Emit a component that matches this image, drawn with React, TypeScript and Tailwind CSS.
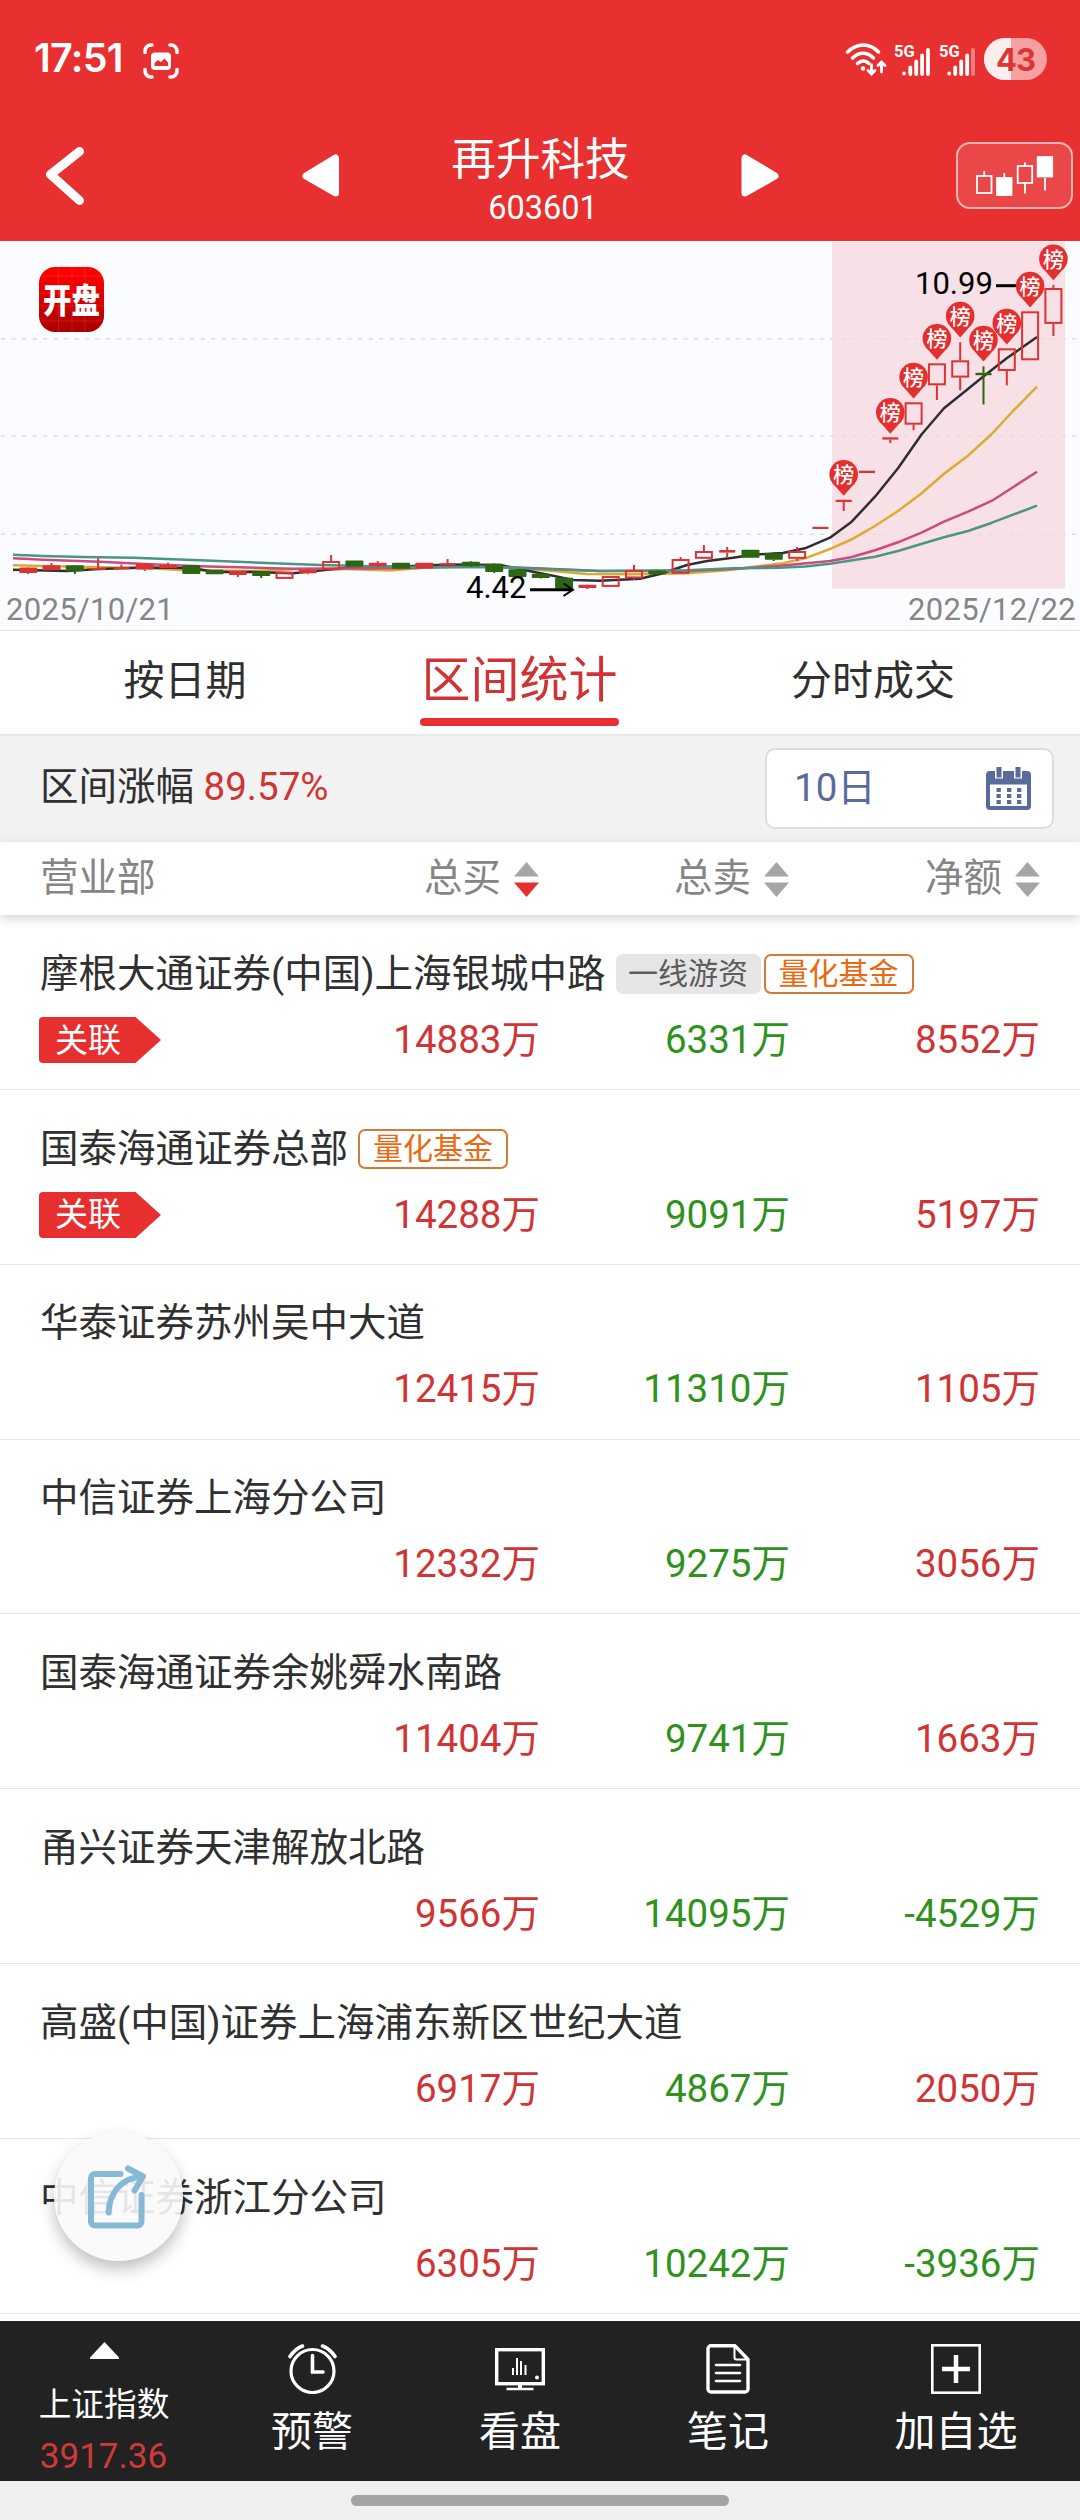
import { clsx } from "clsx";

type CandleKind = "solid" | "hollow" | "down";

// [kind, body top, body bottom, high, low]
type Candle = [CandleKind, number, number, number, number];

interface Branch {
  name: string;
  tags: ("first" | "quant")[];
  linked: boolean;
  buy: string;
  sell: string;
  net: string;
}

const RED = "#da3334";
const GREEN = "#2c6612";

const candles: Candle[] = [
  ["solid", 326.5, 332, 326, 333],
  ["solid", 324.3, 329.3, 322, 329],
  ["down", 324.3, 330.3, 324, 333],
  ["solid", 327, 328.8, 317.3, 329],
  ["solid", 326, 328.3, 323.5, 328],
  ["solid", 322.7, 328.5, 322, 330],
  ["solid", 324, 327.3, 321.7, 327],
  ["down", 324, 333, 324, 333],
  ["down", 328.7, 333.3, 329, 333],
  ["solid", 330, 334, 330, 336],
  ["down", 330.3, 335, 330, 337],
  ["hollow", 330.7, 337.9, 331, 338],
  ["solid", 328.7, 332.3, 328, 333.3],
  ["hollow", 320, 329.2, 314, 329],
  ["down", 319.5, 325.8, 319.5, 326],
  ["solid", 321.7, 325.2, 320, 326],
  ["down", 321.7, 327.7, 321.7, 328],
  ["solid", 321.7, 327.3, 321.7, 327],
  ["solid", 322.3, 324.5, 318, 324],
  ["down", 320.7, 325.3, 320, 326],
  ["down", 322.7, 331, 322, 332],
  ["down", 328.3, 335.9, 328, 336],
  ["down", 332.7, 336.9, 332, 337.5],
  ["down", 336.7, 347.7, 336, 348],
  ["solid", 343.7, 346.9, 343.5, 348],
  ["hollow", 335, 345.9, 335, 346],
  ["hollow", 329, 337.4, 324, 339],
  ["down", 329.5, 333.2, 329, 334],
  ["hollow", 318, 332.8, 316, 333],
  ["hollow", 310, 317.8, 304, 318],
  ["solid", 309, 311.6, 306, 317],
  ["down", 308.7, 316.8, 308.7, 317],
  ["down", 312.3, 318.8, 311, 320],
  ["hollow", 310, 317.8, 306, 320],
  ["solid", 285.8, 288, 286, 287],
  ["solid", 258.8, 261, 259, 270],
  ["solid", 229.7, 232, 230, 231],
  ["solid", 196.3, 198.6, 197, 202],
  ["hollow", 161.3, 183.7, 161.3, 189.3],
  ["hollow", 122.3, 144.3, 122.3, 159],
  ["hollow", 119.3, 136.6, 101.3, 149.3],
  ["down", 131.8, 134.2, 125.3, 163.5],
  ["hollow", 107.3, 130, 107.3, 144.3],
  ["hollow", 70.3, 119.3, 70.3, 119.3],
  ["hollow", 47, 82.9, 44, 95],
];

const candleX = (index: number) => 28.2 + 23.3 * index;

// Days on which the stock made the top traders board
const boardPins = [
  { index: 35, y: 233.3 },
  { index: 37, y: 171.3 },
  { index: 38, y: 136 },
  { index: 39, y: 97.3 },
  { index: 40, y: 75 },
  { index: 41, y: 99 },
  { index: 42, y: 82 },
  { index: 43, y: 45 },
  { index: 44, y: 17.7 },
];

const averages = [
  {
    color: "#dcac2e",
    points:
      "13,324.3 67,325.5 150,327.3 180,329 253,330 300,328 345,328 390,329.5 443,325 500,325.7 550,329.7 587,333 633,333.3 687,332.3 727,329.3 760,325 783,322.3 805,317.3 830,308 851.7,298.3 875,285 898,270 921.7,252.3 944,232.7 968,214.7 991.7,193 1013,170 1037,145.7",
  },
  {
    color: "#2f2f33",
    points:
      "13,328.7 67,330 99,328 145,326.5 192,327 215,331 253,331 293,332.3 315,330 355,326 400,325.5 450,323.5 500,324 533,330.7 553,334.7 573,339 600,339.7 640,337.7 660,333 687,324 707,320 733,316.7 753,313.7 783,312 805,307.3 830,296.7 851.7,280.7 875,255.7 898,227.3 921.7,193.3 944,167.3 966.7,149 983,135.7 1006.7,117.3 1037,96",
  },
  {
    color: "#cb4a80",
    points:
      "13,317.3 43,318.7 100,320.7 150,323.3 200,325.3 293,327.7 400,327.3 480,325.5 530,327 600,330 687,330 733,328 780,324.7 830,320 851,316.3 875,309.3 898,301.3 922,291.3 944,280.7 968,270.7 992,259.7 1013,246.3 1037,230.7",
  },
  {
    color: "#4a9583",
    points:
      "13,313.7 43,315 83,316 133,316.7 200,319.3 260,321.7 320,324 400,326 500,326.3 550,328.3 600,330 687,329.3 733,327.3 780,326.7 805,325.5 830,322.7 875,315.7 898,310 922,302.7 944,296.3 968,290 992,281.7 1013,273.7 1037,264.7",
  },
];

const branches: Branch[] = [
  {
    name: "摩根大通证券(中国)上海银城中路",
    tags: ["first", "quant"],
    linked: true,
    buy: "14883万",
    sell: "6331万",
    net: "8552万",
  },
  {
    name: "国泰海通证券总部",
    tags: ["quant"],
    linked: true,
    buy: "14288万",
    sell: "9091万",
    net: "5197万",
  },
  {
    name: "华泰证券苏州吴中大道",
    tags: [],
    linked: false,
    buy: "12415万",
    sell: "11310万",
    net: "1105万",
  },
  {
    name: "中信证券上海分公司",
    tags: [],
    linked: false,
    buy: "12332万",
    sell: "9275万",
    net: "3056万",
  },
  {
    name: "国泰海通证券余姚舜水南路",
    tags: [],
    linked: false,
    buy: "11404万",
    sell: "9741万",
    net: "1663万",
  },
  {
    name: "甬兴证券天津解放北路",
    tags: [],
    linked: false,
    buy: "9566万",
    sell: "14095万",
    net: "-4529万",
  },
  {
    name: "高盛(中国)证券上海浦东新区世纪大道",
    tags: [],
    linked: false,
    buy: "6917万",
    sell: "4867万",
    net: "2050万",
  },
  {
    name: "中信证券浙江分公司",
    tags: [],
    linked: false,
    buy: "6305万",
    sell: "10242万",
    net: "-3936万",
  },
];

function StatusBar() {
  return (
    <div className="flex h-[118px] shrink-0 items-center justify-between pl-[34px] pr-[33px]">
      <div className="flex items-center gap-[20px]">
        <span className="font-['Inter',sans-serif] text-[39.5px] font-semibold leading-none tracking-[-0.7px]">
          17:51
        </span>
        <svg
          width="36"
          height="36"
          viewBox="0 0 36 36"
          fill="none"
          stroke="#fff"
          strokeWidth="3.6"
          strokeLinecap="round"
          className="mt-[3px]"
        >
          <path d="M2 9.500V8a6 6 0 0 1 6-6h1M27 2h1a6 6 0 0 1 6 6v1.500M34 26.500V28a6 6 0 0 1-6 6h-1M9 34H8a6 6 0 0 1-6-6v-1.500" />
          <rect x="8" y="9.500" width="20" height="17.500" rx="4" fill="#fff" stroke="none" />
          <path
            d="M11.500 23v-3l3.500-3 3 2 3.500-3.500 3.500 4V23z"
            fill="#e83030"
            stroke="none"
          />
        </svg>
      </div>
      <svg
        width="202"
        height="44"
        viewBox="0 0 202 44"
        fill="none"
        stroke="#fff"
        strokeLinecap="round"
      >
        <g strokeWidth="3.500">
          <path d="M2.500 15c9.500-9.500 22.500-9.500 31 0" />
          <path d="M7.500 21c6.500-6.500 14.500-6.500 21 0" />
          <path d="M12.500 26.500c3.500-3.200 8-3.200 11.500 0" />
          <path d="M26.500 28v8.500M23 33.500l3.500 3.500 3.500-3.500M36.500 35v-9M33 28.500l3.500-3.500 3.500 3.500" strokeWidth="2.800" />
        </g>
        <circle cx="18" cy="31.500" r="2.300" fill="#fff" stroke="none" />
        <g
          fill="#fff"
          stroke="none"
          className="font-['Roboto',sans-serif] text-[16.5px] font-bold"
        >
          <text x="49" y="19.500">5G</text>
          <text x="94" y="19.500">5G</text>
        </g>
        <g strokeWidth="3.800">
          <path d="M59 36.500v0.100M65.300 30.500v6.500M71.200 24.500v12.500M77.100 18.500v18.500M83 13v24" />
          <path d="M104.200 36.500v0.100M110.200 30.500v6.500M116.200 24.500v12.500M122.200 18.500v18.500" />
          <path d="M128 13v24" opacity="0.4" />
        </g>
        <rect x="139" y="1" width="63" height="42" rx="21" fill="#f7a0a1" stroke="none" />
        <path d="M166 1h-6a21 21 0 0 0 0 42h6z" fill="#fdeeee" stroke="none" />
        <text
          x="170.500"
          y="33.500"
          textAnchor="middle"
          fill="#d93636"
          stroke="none"
          className="font-['Inter',sans-serif] text-[31px] font-bold tracking-[-1px]"
        >
          43
        </text>
      </svg>
    </div>
  );
}

function TitleBar() {
  return (
    <div className="flex flex-1 items-start">
      <div className="flex w-[302px] pl-[43px] pt-[27px]">
        <svg width="44" height="62" viewBox="0 0 44 62" fill="none" stroke="#fff" strokeWidth="9" strokeLinecap="round" strokeLinejoin="round">
          <path d="M36.500 6.500 7.500 29.500l29 26" />
        </svg>
      </div>
      <svg className="mt-[36px]" width="38" height="44" viewBox="0 0 38 44" fill="#fff" stroke="#fff" strokeWidth="7" strokeLinejoin="round">
        <path d="M4 22 33.500 4v35z" />
      </svg>
      <div className="flex w-[401px] flex-col items-center leading-none">
        <div className="mt-[20px] text-[44.6px]">再升科技</div>
        <div className="mt-[9px] pl-[5px] text-[32.5px]">603601</div>
      </div>
      <svg className="mt-[36px]" width="38" height="44" viewBox="0 0 38 44" fill="#fff" stroke="#fff" strokeWidth="7" strokeLinejoin="round">
        <path d="M34 22 4 4v35z" />
      </svg>
      <div className="ml-auto mr-[7px] mt-[24px] flex h-[67px] w-[117px] items-center justify-center rounded-[14px] border-2 border-[#f7b5b5] bg-[#ea4848]">
        <svg width="80" height="40" viewBox="0 0 80 40" fill="none" stroke="#fff" strokeWidth="1.800">
          <rect x="2" y="20" width="14.500" height="17" />
          <path d="M9.200 15v5M29.300 17v6M50 6.500v4M50 27v10.500M70 22v12.500" />
          <rect x="22" y="22" width="14.500" height="17" fill="#fff" />
          <rect x="42.700" y="10" width="14.500" height="17" />
          <rect x="62.700" y="1" width="14.500" height="19.500" fill="#fff" />
        </svg>
      </div>
    </div>
  );
}

function CandleMark({ candle, index }: { candle: Candle; index: number }) {
  const [kind, top, bottom, high, low] = candle;
  const x = candleX(index);
  const color = kind === "down" ? GREEN : RED;
  const hollow = kind === "hollow";
  const thin = bottom - top < 3;
  const width = thin ? 16 : 18;

  return (
    <g stroke={color} strokeWidth="2" fill={hollow ? "none" : color}>
      {high < top && <path d={`M${x} ${high}V${top}`} />}
      {low > bottom && <path d={`M${x} ${bottom}V${low}`} />}
      {hollow ? (
        <rect x={x - width / 2 + 1} y={top + 1} width={width - 2} height={bottom - top - 2} />
      ) : (
        <rect x={x - width / 2} y={top} width={width} height={bottom - top} rx={thin ? 0 : 1} stroke="none" />
      )}
    </g>
  );
}

function KLineChart() {
  return (
    <div className="h-[390px] shrink-0 border-b border-[#e3e4e7] bg-[#fbfcff]">
      <svg width="1080" height="389" viewBox="0 0 1080 389" className="block">
        <defs>
          <linearGradient id="logo" x1="0" y1="0" x2="0" y2="1">
            <stop offset="0.1" stopColor="#fe0000" />
            <stop offset="1" stopColor="#a80000" />
          </linearGradient>
        </defs>
        <g stroke="#d9dbe1" strokeWidth="1.500" strokeDasharray="4.200 6.300">
          <path d="M1 97.700H1080M1 195H1080M1 293.300H1080" />
        </g>
        <rect x="832" y="1" width="233" height="346.700" fill="#f5d5dd" fillOpacity="0.72" />

        <rect x="39" y="26" width="65" height="65" rx="16" fill="url(#logo)" />
        <path
          d="M58.500 26v65M72 26v65M85 26v65M39 35h65M39 52h65M39 65h65M39 80h65"
          stroke="#fff"
          strokeOpacity="0.1"
        />
        <text
          x="71.500"
          y="60.300"
          textAnchor="middle"
          transform="scale(1 1.2)"
          fill="#fff"
          className="text-[28.5px] font-black"
        >
          开盘
        </text>

        <g fill="none" strokeWidth="2.500" strokeLinejoin="round">
          {averages.map((line) => (
            <polyline key={line.color} points={line.points} stroke={line.color} />
          ))}
        </g>
        {candles.map((candle, index) => (
          <CandleMark key={index} candle={candle} index={index} />
        ))}

        <path d="M996 44.700H1018" stroke="#000" strokeWidth="3" />
        {boardPins.map((pin) => {
          const x = candleX(pin.index);
          return (
            <g key={pin.index}>
              <circle cx={x} cy={pin.y} r="14.300" fill="#e52e2e" />
              <path d={`M${x - 11} ${pin.y + 9}L${x} ${pin.y + 21.500}L${x + 11} ${pin.y + 9}z`} fill="#e52e2e" />
              <text x={x} y={pin.y + 8} textAnchor="middle" fill="#fff" className="text-[21px] font-medium">
                榜
              </text>
            </g>
          );
        })}

        <g className="text-[31px]">
          <text x="915" y="53">10.99</text>
          <text x="466" y="356.700">4.42</text>
        </g>
        <g className="text-[31px] tracking-[0.3px]" fill="#868686">
          <text x="6" y="379">2025/10/21</text>
          <text x="1076" y="379" textAnchor="end">2025/12/22</text>
        </g>
        <path d="M530 348.700H572" stroke="#000" strokeWidth="3" />
        <path d="M563.500 342.500 573 348.700 563.500 355" fill="none" stroke="#000" strokeWidth="2" />
      </svg>
    </div>
  );
}

function Tabs() {
  return (
    <div className="flex h-[105px] shrink-0 border-b-2 border-[#e9e9e9] text-[41px] leading-[76px]">
      <div className="h-[103px] w-[370px] pt-[12px] text-center">按日期</div>
      <div className="flex w-[299px] flex-col items-center text-[49px] text-[#d03333]">
        <div className="h-[87px] pt-[12px]">区间统计</div>
        <div className="h-[8px] w-[199px] rounded-full bg-[#e72f2f]" />
      </div>
      <div className="w-[408px] pt-[12px] text-center">分时成交</div>
    </div>
  );
}

function FilterBar() {
  return (
    <div className="flex h-[105px] shrink-0 items-center justify-between bg-[#f2f2f2] pl-[40px] pr-[26px] text-[38.5px] leading-none">
      <div className="mb-[2px]">
        区间涨幅 <span className="text-[#cf3535]">89.57%</span>
      </div>
      <div className="flex h-[81px] w-[289px] items-center justify-between rounded-[10px] border-2 border-[#dcdddd] bg-white pl-[27px] pr-[21px] text-[#586b9b]">
        <span>10日</span>
        <svg width="45" height="43" viewBox="0 0 45 43" fill="#586b9b">
          <path
            fillRule="evenodd"
            d="M4 4h37a4 4 0 0 1 4 4v31a4 4 0 0 1-4 4H4a4 4 0 0 1-4-4V8a4 4 0 0 1 4-4zM4 17.500V39h37V17.500z"
          />
          <rect x="9" y="-1" width="8" height="12.500" fill="#fff" />
          <rect x="28" y="-1" width="8" height="12.500" fill="#fff" />
          <rect x="10.500" y="0" width="5" height="10.500" />
          <rect x="29.500" y="0" width="5" height="10.500" />
          {[21, 27, 33].map((y) =>
            [10.5, 21, 31].map((x) => (
              <rect key={`${x}-${y}`} x={x} y={y} width="4.300" height="4" />
            )),
          )}
        </svg>
      </div>
    </div>
  );
}

function SortHead({ label, active }: { label: string; active?: boolean }) {
  return (
    <div className="flex items-center justify-end gap-[13px]">
      <span>{label}</span>
      <svg width="25" height="35" viewBox="0 0 25 35" className="mt-[3px]">
        <path d="M12.500 0 25 14.500H0z" fill="#a6a6a6" />
        <path d="M12.500 35 0 20.500h25z" fill={active ? "#e72f2f" : "#a6a6a6"} />
      </svg>
    </div>
  );
}

function BranchRow({ branch }: { branch: Branch }) {
  return (
    <div className="h-[174.86px] border-b border-[#e6e6e6] pt-[36px] leading-none">
      <div className="flex h-[46px] items-center pl-[40px] text-[38.5px]">
        <span className="mr-[10px]">{branch.name}</span>
        {branch.tags.map((tag) => (
          <span
            key={tag}
            className={clsx(
              "mr-[3px] flex h-[40px] items-center justify-center rounded-[7px] text-[30px]",
              tag === "first" && "w-[145px] bg-[#e6e6e6] text-[#5c5c5c]",
              tag === "quant" && "w-[150px] border-2 border-[#d47a35] text-[#e96a13]",
            )}
          >
            {tag === "first" ? "一线游资" : "量化基金"}
          </span>
        ))}
      </div>
      <div className="mt-[20px] grid h-[46px] grid-cols-[154px_386px_250px_250px] items-center text-right text-[38.5px]">
        {branch.linked ? (
          <div className="relative ml-[39px] flex h-[46px] w-[122px] items-center pl-[16px] text-[33px] text-white">
            <svg className="absolute inset-0" width="122" height="46" viewBox="0 0 122 46">
              <path d="M4 0h92.500L122 23 96.500 46H4a4 4 0 0 1-4-4V4a4 4 0 0 1 4-4z" fill="#e72f2f" />
            </svg>
            <span className="relative">关联</span>
          </div>
        ) : (
          <div />
        )}
        <div className="text-[#cf3535]">{branch.buy}</div>
        <div className="text-[#2f921d]">{branch.sell}</div>
        <div className={branch.net.startsWith("-") ? "text-[#2f921d]" : "text-[#cf3535]"}>
          {branch.net}
        </div>
      </div>
    </div>
  );
}

function BottomBar() {
  return (
    <div className="grid h-[160px] shrink-0 grid-cols-[208px_208px_208px_208px_248px] bg-[#222] text-[41px] leading-none text-white">
      <div className="flex flex-col items-center">
        <svg className="mt-[21px]" width="29" height="17" viewBox="0 0 29 17" fill="#fff">
          <path d="M14.500 0 29 15.500V17H0v-1.500z" />
        </svg>
        <div className="mt-[30px] text-[32.7px]">上证指数</div>
        <div className="mt-[17px] pr-px text-[35px] text-[#cf3a38]">3917.36</div>
      </div>
      <div className="flex flex-col items-center pt-[23px]">
        <svg width="49" height="50" viewBox="0 0 49 50" fill="none" stroke="#fff" strokeWidth="3.200" strokeLinecap="round">
          <circle cx="24.500" cy="27" r="21.500" />
          <path d="M24.500 11.500v16.500h10.500" strokeWidth="3.600" />
          <path d="M2 12.500C5 8 9 4 14.500 2M47 12.500C44 8 40 4 34.500 2" strokeWidth="3.600" />
        </svg>
        <div className="mt-[18px]">预警</div>
      </div>
      <div className="flex flex-col items-center pt-[23px]">
        <svg width="50" height="50" viewBox="0 0 50 50" fill="none" stroke="#fff">
          <rect x="1.700" y="5.700" width="46.600" height="34" strokeWidth="3.400" />
          <path d="M18 31v-7M22 31V14M26 31V17M30.500 31V21" strokeWidth="2" />
          <circle cx="42" cy="33.500" r="2" fill="#fff" stroke="none" />
          <path d="M25 40v4" strokeWidth="4" />
          <path d="M11.500 45h27" strokeWidth="2.500" />
        </svg>
        <div className="mt-[18px]">看盘</div>
      </div>
      <div className="flex flex-col items-center pt-[23px]">
        <svg width="44" height="50" viewBox="0 0 44 50" fill="none" stroke="#fff" strokeLinejoin="round">
          <path d="M5 1.800h24L42 15.500V45a3 3 0 0 1-3 3H5a3 3 0 0 1-3-3V4.800a3 3 0 0 1 3-3z" strokeWidth="3.400" />
          <path d="M28.500 3v10.500a2 2 0 0 0 2 2H41" strokeWidth="2" />
          <path d="M10 21h24M10 29h24M10 37h24" strokeWidth="2.600" strokeLinecap="round" />
        </svg>
        <div className="mt-[18px]">笔记</div>
      </div>
      <div className="flex flex-col items-center pt-[23px]">
        <svg width="50" height="50" viewBox="0 0 50 50" fill="none" stroke="#fff">
          <rect x="1.300" y="1.300" width="47.400" height="47.400" strokeWidth="2.600" />
          <path d="M25 11v28M11 25h28" strokeWidth="4.500" />
        </svg>
        <div className="mt-[18px]">加自选</div>
      </div>
    </div>
  );
}

export default function App() {
  return (
    <div className="relative flex h-[2520px] w-[1080px] flex-col overflow-hidden bg-white font-['Roboto','Noto_Sans_CJK_SC',sans-serif] text-[#303030]">
      <div className="flex h-[241px] shrink-0 flex-col bg-[#e83030] text-white">
        <StatusBar />
        <TitleBar />
      </div>
      <KLineChart />
      <Tabs />
      <FilterBar />
      <div className="relative grid h-[74px] shrink-0 grid-cols-[154px_385px_250px_251px] items-center border-t border-[#e9e9e9] pb-px text-[38.5px] leading-none text-[#858585] shadow-[0_4px_10px_rgba(0,0,0,0.16)]">
        <div className="whitespace-nowrap pl-[40px]">营业部</div>
        <SortHead label="总买" active />
        <SortHead label="总卖" />
        <SortHead label="净额" />
      </div>
      <div className="h-[1406px] shrink-0 overflow-hidden">
        {branches.map((branch) => (
          <BranchRow key={branch.name} branch={branch} />
        ))}
      </div>
      <BottomBar />
      <div className="flex flex-1 justify-center bg-[#f0f0f3] pt-[14px]">
        <div className="h-[11px] w-[378px] rounded-full bg-[#a4a4a6]" />
      </div>

      {/* Floating share button */}
      <div className="absolute left-[54px] top-[2132px] flex size-[129px] items-center justify-center rounded-full bg-[#fafafa]/90 pr-[3px] shadow-[0_8px_16px_rgba(0,0,0,0.25)]">
        <svg width="60" height="64" viewBox="0 0 60 64" fill="none" stroke="#86b9d5" strokeWidth="6" strokeLinecap="round" strokeLinejoin="round">
          <path d="M33.500 9H8a4 4 0 0 0-4 4v43.500a4 4 0 0 0 4 4h42.500a4 4 0 0 0 4-4V30" />
          <path d="M21.500 47.500C22.500 27.500 34.500 13 55 11.500" />
          <path d="M41 3.500 56 11.500 47.500 25.500" />
        </svg>
      </div>
    </div>
  );
}
